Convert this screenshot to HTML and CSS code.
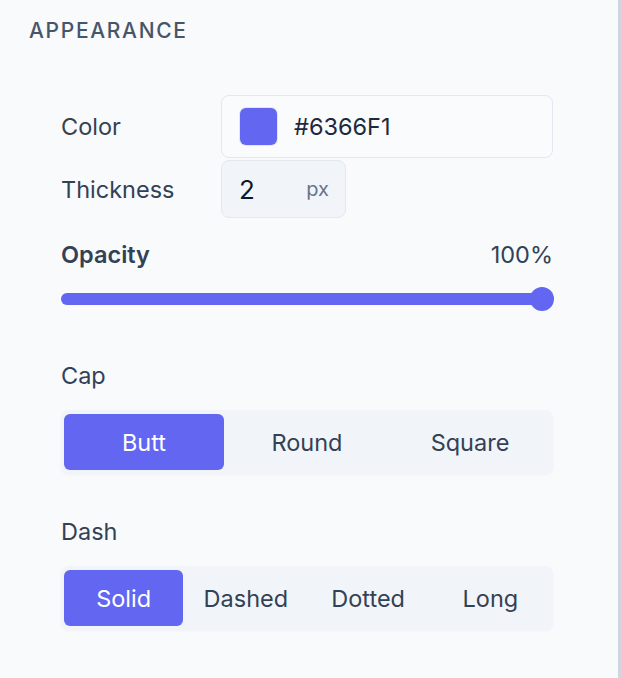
FILE: index.html
```html
<!DOCTYPE html>
<html lang="en">
<head>
    <meta charset="UTF-8">
    <meta name="viewport" content="width=device-width, initial-scale=1.0">
    <title>Stroke Appearance</title>
    <link rel="stylesheet" href="styles.css">
</head>
<body>

<div class="panel">
    <h3 class="section-title">APPEARANCE</h3>

    <div class="section">
        <div class="field-grid">
            <label class="field-label">Color</label>
            <div class="color-input">
                <span class="swatch"></span>
                <span class="color-value">#6366F1</span>
            </div>

            <label class="field-label">Thickness</label>
            <div class="number-input">
                <span class="number-value">2</span>
                <span class="unit">px</span>
            </div>
        </div>

        <div class="slider-head">
            <span class="slider-label">Opacity</span>
            <span class="slider-value">100%</span>
        </div>
        <div class="slider">
            <div class="slider-fill" style="width: 100%"></div>
            <span class="slider-thumb"></span>
        </div>

        <div class="group-label">Cap</div>
        <div class="segmented cols-3">
            <button class="segment active">Butt</button>
            <button class="segment">Round</button>
            <button class="segment">Square</button>
        </div>

        <div class="group-label">Dash</div>
        <div class="segmented cols-4">
            <button class="segment active">Solid</button>
            <button class="segment">Dashed</button>
            <button class="segment">Dotted</button>
            <button class="segment">Long</button>
        </div>
    </div>
</div>

</body>
</html>
```

FILE: styles.css
```css
body {
    margin: 0;
    font-family: Inter, "Noto Sans", sans-serif;
    background-color: #f8fafc;
    color: #334155;
}

.panel {
    width: 622px;
    min-height: 678px;
    box-sizing: border-box;
    padding: 18px 0 0 29px;
    border-right: 4px solid #cfd6e2;
    background-color: #f8fafc;
}

.section-title {
    margin: 0;
    font-size: 21px;
    font-weight: 500;
    letter-spacing: 0.08em;
    color: #475569;
}

.section {
    width: 492px;
    margin: 52px 0 0 32px;
}

.field-grid {
    display: grid;
    grid-template-columns: 160px 1fr;
    row-gap: 2px;
    align-items: center;
}

.field-label {
    font-size: 23.5px;
}

.color-input {
    display: flex;
    align-items: center;
    gap: 17px;
    height: 63px;
    padding-left: 18px;
    box-sizing: border-box;
    border: 1.5px solid #e2e8f0;
    border-radius: 8px;
    background-color: #fafbfd;
}

.swatch {
    width: 37px;
    height: 37px;
    border-radius: 6px;
    background-color: #6366f1;
    box-shadow: 0 0 0 1px #e2e8f0;
}

.color-value {
    font-size: 23.5px;
    color: #1e293b;
}

.number-input {
    display: flex;
    align-items: center;
    justify-content: space-between;
    width: 125px;
    height: 58px;
    padding: 0 16px 0 17px;
    box-sizing: border-box;
    border: 1.5px solid #e2e8f0;
    border-radius: 8px;
    background-color: #f1f5f9;
}

.number-value {
    font-size: 26px;
    color: #0f172a;
}

.unit {
    font-size: 20px;
    color: #64748b;
}

.slider-head {
    display: flex;
    justify-content: space-between;
    margin-top: 22px;
    font-size: 23.5px;
}

.slider-label {
    font-weight: 600;
}

.slider {
    position: relative;
    height: 12px;
    margin-top: 24px;
    border-radius: 6px;
    background-color: #e2e8f0;
}

.slider-fill {
    height: 100%;
    border-radius: 6px;
    background-color: #6366f1;
}

.slider-thumb {
    position: absolute;
    right: -1px;
    top: 50%;
    width: 24px;
    height: 24px;
    margin-top: -12px;
    border-radius: 50%;
    background-color: #6366f1;
}

.group-label {
    margin-top: 56px;
    font-size: 23.5px;
}

.segmented + .group-label {
    margin-top: 43px;
}

.segmented {
    display: grid;
    gap: 3px;
    margin-top: 20px;
    padding: 4px 3px;
    border-radius: 8px;
    background-color: #f1f5f9;
    box-shadow: 0 1px 3px rgba(15, 23, 42, 0.04);
}

.cols-3 {
    grid-template-columns: repeat(3, 1fr);
}

.cols-4 {
    grid-template-columns: repeat(4, 1fr);
}

.segment {
    height: 56px;
    border: none;
    border-radius: 6px;
    background: none;
    font-family: inherit;
    font-size: 23.5px;
    color: #334155;
    cursor: pointer;
}

.segment.active {
    background-color: #6366f1;
    color: #fff;
}
```
